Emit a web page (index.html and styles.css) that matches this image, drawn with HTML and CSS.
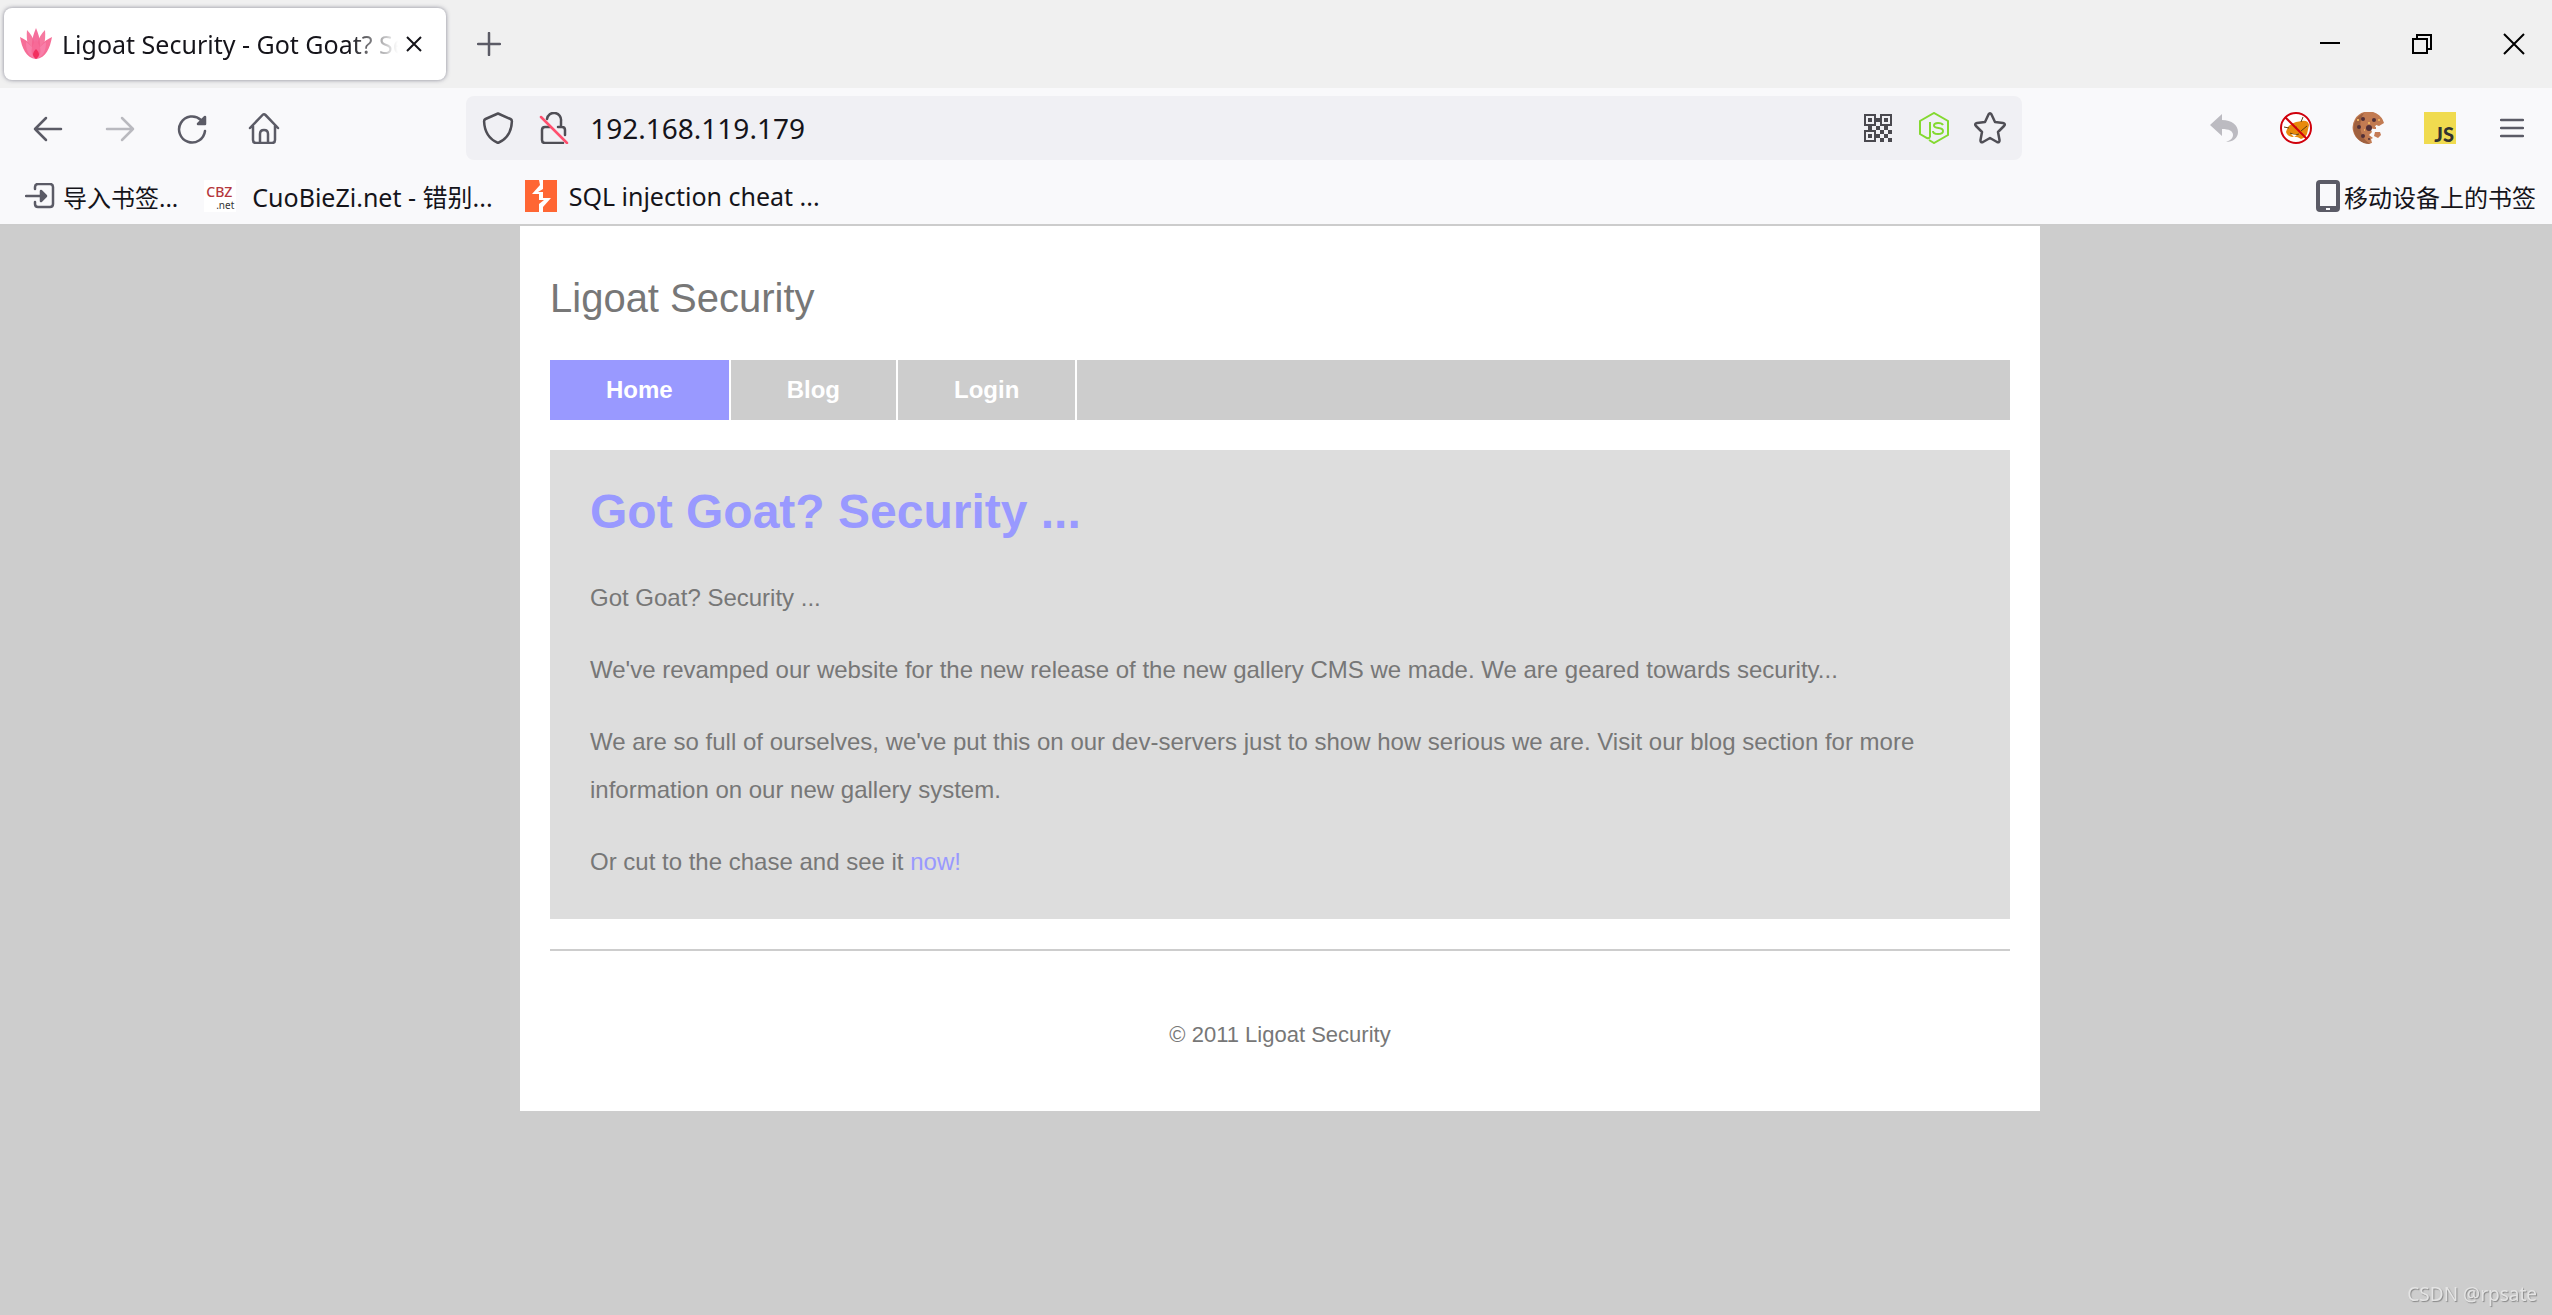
FILE: index.html
```html
<!DOCTYPE html>
<html lang="en">
<head>
<meta charset="UTF-8">
<meta name="viewport" content="width=device-width, initial-scale=1.0">
<title>Ligoat Security - Got Goat? Security ...</title>
<link rel="stylesheet" href="styles.css">
</head>
<body>
<header class="browser">
  <div class="tab-strip">
    <div class="tab">
      <svg class="favicon" viewBox="0 0 32 32">
        <path d="M16 31C9 20 12 10 16 0c4 10 7 20 0 31z" fill="#f56f9d"/>
        <path d="M16 31C8 25 6 12 7 2c7 7 10 17 9 29zM16 31c8-6 10-19 9-29-7 7-10 17-9 29z" fill="#f4628f" opacity=".85"/>
        <path d="M16 31C6 30 2 20 0 9c9 4 15 11 16 22zM16 31c10-1 14-11 16-22-9 4-15 11-16 22z" fill="#f66d97"/>
        <path d="M16 31C7 28 6 20 6 14c6 4 10 9 10 17zM16 31c9-3 10-11 10-17-6 4-10 9-10 17z" fill="#f983ae" opacity=".8"/>
        <path d="M16 31c-6-4-6-11 0-19 6 8 6 15 0 19z" fill="#f76a97"/>
        <path d="M16 31c-4-3-4-6 0-10 4 4 4 7 0 10z" fill="#f2305f"/>
      </svg>
      <span class="tab-title">Ligoat Security - Got Goat? Security ...</span>
      <button class="tab-close" aria-label="Close tab">
        <svg width="16" height="16" viewBox="0 0 16 16" fill="none" stroke="#15141a" stroke-width="2"><path d="M1 1l14 14M15 1L1 15"/></svg>
      </button>
    </div>
    <button class="new-tab" aria-label="New tab">
      <svg width="24" height="24" viewBox="0 0 24 24" class="line"><path d="M12 1v22M1 12h22"/></svg>
    </button>
    <div class="window-buttons">
      <button aria-label="Minimize"><svg width="20" height="20" viewBox="0 0 20 20"><path d="M0 8h20v2H0z"/></svg></button>
      <button aria-label="Restore"><svg width="20" height="20" viewBox="0 0 20 20" fill="none" stroke="#000" stroke-width="2"><path d="M1 5h14v14H1zM5 5V1h14v14h-4"/></svg></button>
      <button aria-label="Close"><svg width="22" height="22" viewBox="0 0 22 22" fill="none" stroke="#000" stroke-width="2"><path d="M1 1l20 20M21 1L1 21"/></svg></button>
    </div>
  </div>

  <div class="toolbar">
    <div class="tools">
      <button aria-label="Back"><svg width="32" height="32" viewBox="0 0 32 32" class="line"><path d="M29 17H3M14 6L3 17l11 11"/></svg></button>
      <button aria-label="Forward" disabled><svg width="32" height="32" viewBox="0 0 32 32" class="line"><path d="M3 17h26M18 6l11 11-11 11"/></svg></button>
      <button aria-label="Reload"><svg width="32" height="32" viewBox="0 0 32 32" class="line"><path d="M29 19A13 13 0 1 1 25 8"/><path d="M29 5v7h-7z" fill="#5b5b66"/></svg></button>
      <button aria-label="Home"><svg width="32" height="32" viewBox="0 0 32 32" class="line"><path d="M2 16L14.500 3q1.500-1.500 3 0L30 16M5 14v14q0 3 3 3h16q3 0 3-3V14M12 31v-9q0-4 4-4t4 4v9"/></svg></button>
    </div>
    <div class="spacer"></div>
    <div class="url-bar">
      <button aria-label="Tracking protection"><svg width="32" height="32" viewBox="0 0 32 32" class="line dark"><path d="M16 1.500L28.500 7q1.500.7 1.400 2.500C29.500 20 25 27 16 31 7 27 2.500 20 2.100 9.500 2 7.700 3.500 7 3.500 7z"/></svg></button>
      <button aria-label="Connection not secure"><svg width="32" height="32" viewBox="0 0 32 32" class="line dark"><path d="M9 7a7 7 0 0 1 14 2v6M12 15H7q-3 0-3 3v10q0 3 3 3h18M20 15h4q3 0 3 3v5"/><path d="M3 5l26 26" stroke="#ff4f6e"/></svg></button>
      <input type="text" value="192.168.119.179" aria-label="Address">
      <button aria-label="QR code"><svg width="28" height="28" viewBox="0 0 14 14" fill="#4a494f"><path fill-rule="evenodd" d="M0 0h6v6H0zM1 1v4h4V1zM8 0h6v6H8zM9 1v4h4V1zM0 8h6v6H0zM1 9v4h4V9z"/><path d="M2 2h2v2H2zM10 2h2v2h-2zM2 10h2v2H2zM6 2h2v2H6zM2 6h2v2H2zM6 6h2v2H6zM10 6h2v2h-2zM8 8h2v2H8zM12 8h2v2h-2zM6 10h2v2H6zM10 10h2v2h-2zM8 12h2v2H8zM12 12h2v2h-2z"/></svg></button>
      <button aria-label="Node.js"><svg width="32" height="32" viewBox="0 0 32 32" fill="none" stroke="#84d930" stroke-width="2"><path d="M12 25q-1 2-3 1l-7-4V9L16 1l14 8v14l-14 8-5-3"/><path d="M12 10v15M25 13q-1-2-5-2t-4 2.500q0 2 4.500 2.500t4.500 3q0 3-5 3t-5-3"/></svg></button>
      <button aria-label="Bookmark this page"><svg width="32" height="32" viewBox="0 0 32 32" class="line dark"><path d="M14.500 2.500q1.500-2.500 3 0L21 10l8 1q3 .7 1 3l-6 6 1.500 8q.2 3-2.500 2l-7-4-7 4q-2.700 1-2.500-2L8 20l-6-6q-2-2.300 1-3l8-1z"/></svg></button>
    </div>
    <div class="spacer"></div>
    <div class="tools">
      <button aria-label="Undo"><svg width="32" height="32" viewBox="0 0 32 32" fill="#bcbbc1"><path d="M2 13L14 2v6c10 0 16 5 16 12 0 6-5 10-12 10 5-2 7-4 7-7 0-4-4-6-11-6v7z"/></svg></button>
      <button aria-label="Blocker">
        <svg width="32" height="32" viewBox="0 0 32 32"><circle cx="16" cy="16" r="15" fill="#fff"/><path d="M6 20q2-8 10-10l6-1q6-1 7 4l-2 9q-2 4-6 5-4-3-9-2-5-1-6-5z" fill="#e88a0c"/><path d="M4 15l5 1M23 5l-2 5M10 21l5 2 4-1M21 19l6-5M15 16l2-1" stroke="#5b3d12" fill="none"/><path d="M11 22l6 1-3 2z" fill="#fff"/><circle cx="16" cy="16" r="15" fill="none" stroke="#d0000c" stroke-width="2"/><path d="M5 5l22 22" stroke="#d0000c" stroke-width="2"/></svg>
      </button>
      <button aria-label="Cookies">
        <svg width="32" height="32" viewBox="0 0 32 32"><path d="M32 11A16 16 0 1 0 20 31l-1-4 2-1-4-3 3-3-2-4 4 1 2-4 3 1z" fill="#c27b52"/><path d="M12 1A16 16 0 0 0 17 32h2C8 27 5 12 12 1z" fill="#a0613f"/><circle cx="11" cy="7" r="2" fill="#513038"/><circle cx="22" cy="8" r="2" fill="#513038"/><circle cx="7" cy="15" r="2" fill="#513038"/><circle cx="17" cy="16" r="3" fill="#513038"/><circle cx="11" cy="24" r="2" fill="#513038"/><circle cx="17" cy="27" r="1" fill="#513038"/><path d="M5 8h2M16 11h2M26 8h2M12 18h1" stroke="#edb05d" stroke-width="2"/><path d="M23 20l5 0 1 3-3 3-4-2zM22 15h2v2h-2z" fill="#c47b56"/></svg>
      </button>
      <button aria-label="JavaScript"><span class="js-icon">JS</span></button>
      <button aria-label="Menu"><svg width="24" height="20" viewBox="0 0 24 20" class="line"><path d="M1 2h22M1 10h22M1 18h22"/></svg></button>
    </div>
  </div>

  <nav class="bookmarks">
    <a href="#" class="import">
      <svg width="30" height="26" viewBox="0 0 30 26" class="line"><path d="M10 6V4q0-3 3-3h12q3 0 3 3v17q0 3-3 3H13q-3 0-3-3v-2M1 13h17"/><path d="M16 8l5 5-5 5z" fill="#5b5b66"/></svg>
      导入书签...
    </a>
    <a href="#" class="cbz"><span class="cbz-icon"><b>CBZ</b><i>.net</i></span>CuoBieZi.net - 错别...</a>
    <a href="#" class="sql">
      <svg width="32" height="32" viewBox="0 0 32 32"><path fill="#ff6633" d="M0 0h32v32H0z"/><path fill="#fff" d="M14 0h4v9l-5 3h5v6h8l-8 9v5h-4v-8l5-4h-5v-6H7l8-9z"/></svg>
      SQL injection cheat ...
    </a>
    <a href="#" class="mobile">
      <svg width="24" height="32" viewBox="0 0 24 32"><path fill="#5b5b66" fill-rule="evenodd" d="M4 0h16q4 0 4 4v24q0 4-4 4H4q-4 0-4-4V4q0-4 4-4zM4 4v22h16V4zM10 28v2h4v-2z"/></svg>
      移动设备上的书签
    </a>
  </nav>
</header>

<div class="page">
  <div class="container">
    <h2>Ligoat Security</h2>
    <nav class="menu">
      <a href="#" class="active">Home</a>
      <a href="#">Blog</a>
      <a href="#">Login</a>
    </nav>
    <main class="content">
      <h1>Got Goat? Security ...</h1>
      <p>Got Goat? Security ...</p>
      <p>We've revamped our website for the new release of the new gallery CMS we made. We are geared towards security...</p>
      <p>We are so full of ourselves, we've put this on our dev-servers just to show how serious we are. Visit our blog section for more information on our new gallery system.</p>
      <p>Or cut to the chase and see it <a href="#">now!</a></p>
    </main>
    <footer>&copy; 2011 Ligoat Security</footer>
  </div>
</div>

<div class="watermark">CSDN @rpsate</div>
</body>
</html>
```

FILE: styles.css
```css
* {
  box-sizing: border-box;
}

body {
  margin: 0;
  min-height: 100vh;
  background-color: #cdcdcd;
  color: #777;
  font-family: "Liberation Sans", Arial, sans-serif;
  font-size: 24px;
}

a {
  text-decoration: none;
}

button {
  display: flex;
  align-items: center;
  justify-content: center;
  padding: 0;
  border: none;
  background: none;
  cursor: pointer;
}

svg {
  flex: none;
}

/* Browser bars */
.browser {
  background-color: #f9f9fb;
  border-bottom: 2px solid #ccc;
  color: #15141a;
  font-family: "Noto Sans", "Noto Sans CJK SC", sans-serif;
  font-size: 25px;
}

.tab-strip {
  display: flex;
  align-items: center;
  height: 88px;
  padding-left: 4px;
  background-color: #f0f0f0;
}

.tab {
  display: flex;
  align-items: center;
  width: 442px;
  height: 72px;
  padding: 0 16px;
  border-radius: 8px;
  background-color: #fff;
  box-shadow: 0 0 4px rgba(90, 90, 110, 0.7);
}

.favicon {
  width: 32px;
  height: 32px;
  margin-right: 10px;
}

.tab-title {
  flex: 1;
  overflow: hidden;
  white-space: nowrap;
  -webkit-mask-image: linear-gradient(to left, transparent, #000 48px);
  mask-image: linear-gradient(to left, transparent, #000 48px);
}

.tab-close {
  width: 32px;
  height: 32px;
}

.new-tab {
  width: 64px;
  height: 64px;
  margin-left: 11px;
}

.window-buttons {
  display: flex;
  gap: 16px;
  margin-left: auto;
}

.window-buttons button {
  width: 76px;
  height: 72px;
}

.toolbar {
  display: flex;
  align-items: center;
  height: 80px;
  padding: 0 8px 0 16px;
}

.tools {
  display: flex;
  gap: 8px;
}

.tools button {
  width: 64px;
  height: 64px;
}

.tools button:disabled {
  opacity: 0.4;
}

.line {
  fill: none;
  stroke: #5b5b66;
  stroke-width: 2.5;
  stroke-linecap: round;
  stroke-linejoin: round;
}

.line.dark {
  stroke: #4f4e55;
}

.spacer {
  flex: 11;
}

.url-bar {
  flex: 100;
  display: flex;
  align-items: center;
  height: 64px;
  padding: 0 4px;
  border-radius: 8px;
  background-color: #f0f0f4;
}

.url-bar button {
  width: 56px;
  height: 56px;
}

.url-bar input {
  flex: 1;
  min-width: 0;
  padding: 0 8px;
  border: none;
  outline: none;
  background: none;
  color: #15141a;
  font-family: inherit;
  font-size: 28px;
}

.js-icon {
  width: 32px;
  height: 32px;
  padding: 12px 2px 0 0;
  background-color: #f0db4f;
  color: #323330;
  font-family: Lato, sans-serif;
  font-size: 20px;
  font-weight: 900;
  line-height: 20px;
  text-align: right;
}

.bookmarks {
  display: flex;
  align-items: center;
  height: 56px;
  padding: 0 16px 0 25px;
}

.bookmarks a {
  display: flex;
  align-items: center;
  gap: 8px;
  color: #15141a;
  white-space: nowrap;
}

.bookmarks .import,
.bookmarks .mobile {
  font-size: 24px;
}

.bookmarks .cbz {
  gap: 16px;
  margin-left: 26px;
}

.bookmarks .sql {
  gap: 12px;
  margin-left: 32px;
}

.bookmarks .mobile {
  gap: 4px;
  margin-left: auto;
}

.cbz-icon {
  display: flex;
  flex-direction: column;
  width: 32px;
  height: 32px;
  padding: 4px 2px 0;
  background-color: #fff;
}

.cbz-icon b {
  color: #b5373d;
  font-size: 14px;
  font-weight: 500;
  line-height: 16px;
}

.cbz-icon i {
  color: #333;
  font-size: 10px;
  font-style: normal;
  line-height: 10px;
  text-align: right;
}

/* Page */
.page {
  padding-left: 8px;
}

.container {
  max-width: 1520px;
  margin: 0 auto;
  padding: 0 30px;
  background-color: #fff;
}

h2 {
  margin: 0;
  padding: 48px 0 38px;
  font-size: 40px;
  font-weight: normal;
  line-height: 48px;
}

.menu {
  display: flex;
  height: 60px;
  margin-bottom: 30px;
  background-color: #cdcdcd;
}

.menu a {
  padding: 0 56px;
  border-right: 2px solid #fff;
  color: #fff;
  font-weight: bold;
  line-height: 60px;
}

.menu .active {
  background-color: #9999ff;
}

.content {
  padding: 34px 40px 33px;
  background-color: #ddd;
}

h1 {
  margin: 0 0 34px;
  color: #9999ff;
  font-size: 48px;
  line-height: 56px;
}

.content p {
  margin: 0 0 24px;
  line-height: 48px;
}

.content p:last-child {
  margin-bottom: 0;
}

.content p a {
  color: #9999ff;
}

footer {
  margin-top: 30px;
  padding: 60px 0 52px;
  border-top: 2px solid #cdcdcd;
  font-size: 22px;
  line-height: 48px;
  text-align: center;
}

.watermark {
  position: fixed;
  right: 15px;
  bottom: 8px;
  color: #e4e4e4;
  font-family: "Noto Sans", sans-serif;
  font-size: 19px;
  line-height: 26px;
  text-shadow: 1px 1px 1px #888;
}
```
